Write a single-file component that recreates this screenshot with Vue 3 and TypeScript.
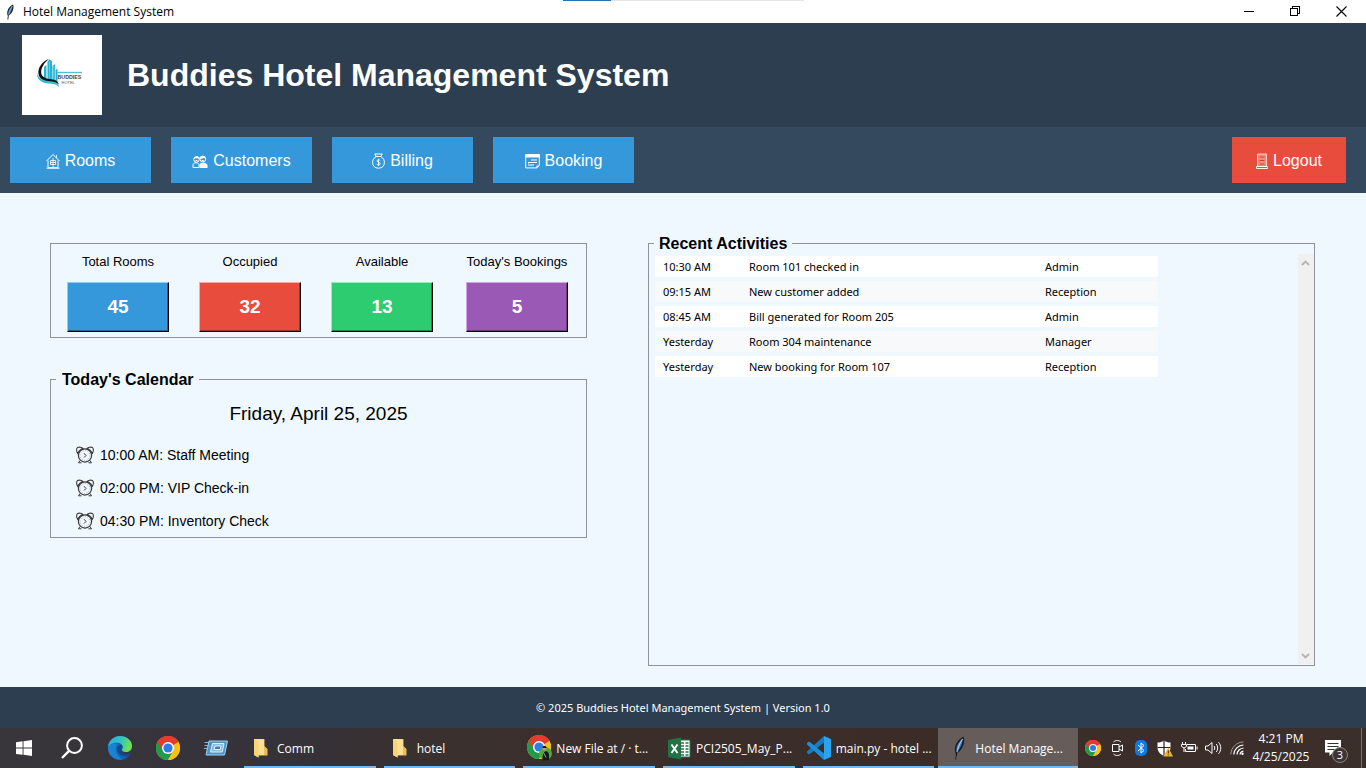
<script setup lang="ts">
interface NavItem {
  label: string
  icon: 'rooms' | 'customers' | 'billing' | 'booking'
}
interface Stat {
  label: string
  value: number
  tone: string
}
interface Activity {
  time: string
  text: string
  user: string
}
interface Task {
  label: string
  icon: 'folder' | 'profile' | 'excel' | 'code' | 'feather'
  active?: boolean
}

const navItems: NavItem[] = [
  { label: 'Rooms', icon: 'rooms' },
  { label: 'Customers', icon: 'customers' },
  { label: 'Billing', icon: 'billing' },
  { label: 'Booking', icon: 'booking' },
]

const stats: Stat[] = [
  { label: 'Total Rooms', value: 45, tone: 'blue' },
  { label: 'Occupied', value: 32, tone: 'red' },
  { label: 'Available', value: 13, tone: 'green' },
  { label: "Today's Bookings", value: 5, tone: 'purple' },
]

const events: string[] = ['10:00 AM: Staff Meeting', '02:00 PM: VIP Check-in', '04:30 PM: Inventory Check']

const activities: Activity[] = [
  { time: '10:30 AM', text: 'Room 101 checked in', user: 'Admin' },
  { time: '09:15 AM', text: 'New customer added', user: 'Reception' },
  { time: '08:45 AM', text: 'Bill generated for Room 205', user: 'Admin' },
  { time: 'Yesterday', text: 'Room 304 maintenance', user: 'Manager' },
  { time: 'Yesterday', text: 'New booking for Room 107', user: 'Reception' },
]

const tasks: Task[] = [
  { label: 'Comm', icon: 'folder' },
  { label: 'hotel', icon: 'folder' },
  { label: 'New File at / · t...', icon: 'profile' },
  { label: 'PCI2505_May_P...', icon: 'excel' },
  { label: 'main.py - hotel ...', icon: 'code' },
  { label: 'Hotel Manage...', icon: 'feather', active: true },
]
</script>

<template>
  <div class="screen">
    <svg class="defs" aria-hidden="true">
      <defs>
        <symbol id="feather" viewBox="0 0 14 24">
          <path d="M11.500.8C8 2 4.500 6 3.200 10.500c-.8 3-.3 5.500.8 7.500L5 17c3-1 6-5.500 7-10 .5-2.500.3-5-.5-6.200z" fill="#16202c" />
          <path d="M10.800 2.500C8 4.500 5 8.500 4.500 12.500c-.2 1.500 0 2.700.5 3.500 2.500-2.500 5.500-8 5.800-13.500z" fill="#4a80bd" />
          <path d="M10.600 3C7.500 7.500 5 13 3.800 22.800" fill="none" stroke="#dbe6f2" stroke-width=".8" />
          <path d="M4.800 16 3.700 23.300" stroke="#111" stroke-width="1.200" />
        </symbol>
        <symbol id="chrome" viewBox="0 0 24 24">
          <circle cx="12" cy="12" r="12" fill="#fbc116" />
          <path d="M12 12 22.400 6A12 12 0 0 0 1.600 6z" fill="#e33b2e" />
          <path d="M12 12 1.600 6A12 12 0 0 0 12 24l5.200-9z" fill="#219a4c" />
          <path d="M1.600 6 6.800 15 12 12V6.500z" fill="#219a4c" />
          <path d="M1.600 6A12 12 0 0 1 22.400 6H12L5 12z" fill="#e33b2e" />
          <path d="M12 24l5.200-9L22.400 6A12 12 0 0 1 12 24z" fill="#fbc116" />
          <circle cx="12" cy="12" r="6" fill="#fff" />
          <circle cx="12" cy="12" r="4.600" fill="#2f7bea" />
        </symbol>
      </defs>
    </svg>

    <header class="titlebar">
      <svg class="title-icon" width="10" height="16"><use href="#feather" /></svg>
      <span class="title-text">Hotel Management System</span>
      <div class="window-buttons">
        <button type="button" aria-label="Minimize">
          <svg width="11" height="11" viewBox="0 0 11 11" shape-rendering="crispEdges"><path d="M0 5.500h10" stroke="#000" /></svg>
        </button>
        <button type="button" aria-label="Restore">
          <svg width="11" height="11" viewBox="0 0 11 11" shape-rendering="crispEdges">
            <path d="M.5 2.500h7v7h-7zM2.500 2.500v-2h7v7h-2" fill="none" stroke="#000" />
          </svg>
        </button>
        <button type="button" aria-label="Close">
          <svg width="11" height="11" viewBox="0 0 11 11"><path d="M.5.5l10 10M10.500.5l-10 10" stroke="#000" stroke-width="1.100" /></svg>
        </button>
      </div>
      <div class="load-strip"></div>
    </header>

    <div class="banner">
      <svg class="logo" width="80" height="80" viewBox="0 0 80 80" role="img" aria-label="Buddies Hotel logo">
        <rect width="80" height="80" fill="#fff" />
        <path d="M22 44V32l2.500-2v15zM25.500 45V27l2-2.800 2.500 2V46zM30.500 46V31l2.500-2v18zM33.500 47V35l2-1.500V47z" fill="#25b4d2" />
        <path d="M24.500 30v15M27.500 27v19M32 31v15" stroke="#a6e2ec" stroke-width=".5" />
        <path d="M27 24c-7 2.500-11.500 9-10.500 15 .8 5 5.500 7.500 11 8 4 .3 7 .5 9.500 2.500-1.500-4-5-5.200-9-5.500-5-.4-8.500-2.500-8.800-6.500-.3-4.500 3-10 7.800-13.500z" fill="#111" />
        <path d="M15 38c-.5 6 4 10 11.500 10.500 4.500.3 8 .6 11 4-1.500-4.500-4-6-9-6.300C21 45.800 16 43 15 38z" fill="#35b9cf" />
        <path d="M35 37.500h25" stroke="#52bfd2" stroke-width="1.400" />
        <text x="35.500" y="44" font-size="5.300" font-weight="700" fill="#444">BUDDIES</text>
        <text x="39.500" y="48.500" font-size="4" fill="#555">HOTEL</text>
      </svg>
      <h1>Buddies Hotel Management System</h1>
    </div>

    <nav class="toolbar">
      <button v-for="item in navItems" :key="item.label" type="button" class="nav-button">
        <svg v-if="item.icon === 'rooms'" width="14" height="16" viewBox="0 0 14 16" fill="none" stroke="#fff">
          <path d="M.5 8 7 1.500 13.500 8M2 7.500v7.200h10V7.500M.5 15.200h13" />
          <path d="M10.500 2v3M4.500 7.500h5v4h-5zM7 5v10M4.500 9.500h5" stroke-width=".8" />
        </svg>
        <svg v-else-if="item.icon === 'customers'" width="16" height="16" viewBox="0 0 16 16">
          <g fill="none" stroke="#fff">
            <circle cx="4.500" cy="6.500" r="2.700" />
            <circle cx="10.800" cy="6" r="2.900" />
            <path d="M1 14.500v-2.800c.5-1.500 1.500-2 3-2s2.500.5 3 2v2.800z" />
          </g>
          <path d="M1.500 5.500c.5-2.500 5-3.500 6-.5 1-3 6-2.500 6.500.8l-2.200-.8-2 .7-2.300-.2-3.200-.3zM7.500 15v-3.500c.5-1.200 1.800-2 3.500-2s3.700.8 4.500 2.500v3z" fill="#fff" />
          <path d="M3.500 7.500h2M9.700 7.500h2" stroke="#fff" />
        </svg>
        <svg v-else-if="item.icon === 'billing'" width="13" height="16" viewBox="0 0 13 16" fill="none" stroke="#fff">
          <path d="M4.200 3.500 2.800 1h7.400L8.800 3.500M3.500 3.500h6M4 3.800C1.500 5 .6 7.200.6 9.500c0 3.500 2.300 5.700 5.900 5.700s5.900-2.200 5.900-5.700C12.400 7.200 11.500 5 9 3.800" />
          <path d="M8.200 7.500C7.500 6.500 5 6.600 5 8s3.200 1.200 3.200 2.700-2.700 1.600-3.500.4M6.500 5.800v7" stroke-width=".9" />
        </svg>
        <svg v-else width="15" height="16" viewBox="0 0 15 16">
          <path d="M.7 1.500h13.600v11L12 14.900H.7z" fill="none" stroke="#fff" />
          <path d="M.5 1h14v3.500H.5z" fill="#fff" />
          <path d="M6 7h6M3 9.500h9M3 12h6M3.500 10.500l1-1.500" stroke="#fff" />
          <path d="M11.500 15v-2.500h2.800z" fill="#fff" />
        </svg>
        <span>{{ item.label }}</span>
      </button>
      <button type="button" class="nav-button logout">
        <svg width="12" height="16" viewBox="0 0 12 16">
          <path d="M1.500 1h9v12.500h-9z" fill="#f08a7f" stroke="#fbd9d5" stroke-width=".9" />
          <path d="M3.500 4h5M3.500 7.500h5M3.500 11h5" stroke="#d4402f" stroke-width="1.200" />
          <path d="M.5 13.500h11v2H.5z" fill="#e74c3c" stroke="#fff" stroke-width=".9" />
        </svg>
        <span>Logout</span>
      </button>
    </nav>

    <main class="content">
      <div class="left">
        <section class="stats" aria-label="Room statistics">
          <div v-for="stat in stats" :key="stat.label" class="stat">
            <span class="stat-label">{{ stat.label }}</span>
            <span class="stat-value" :class="stat.tone">{{ stat.value }}</span>
          </div>
        </section>

        <fieldset class="calendar">
          <legend>Today's Calendar</legend>
          <p class="date">Friday, April 25, 2025</p>
          <ul>
            <li v-for="event in events" :key="event">
              <svg width="18" height="18" viewBox="0 0 18 18" fill="none" stroke="#3a3a3a">
                <circle cx="9" cy="9.500" r="6.600" stroke-width="1.200" />
                <circle cx="9" cy="9.500" r="4.900" stroke="#999" stroke-width=".8" stroke-dasharray="1 1.500" />
                <path d="M1.800 7.500C.4 6 .2 2.500 1.500 1.600 3 .8 5.800 1 7 2.600 4.800 3.300 2.700 5 1.800 7.500zM16.200 7.500c1.400-1.500 1.600-5 .3-5.900-1.500-.8-4.300-.6-5.500 1 2.200.7 4.300 2.400 5.200 4.900z" stroke-width="1.100" />
                <path d="M4 14.500 2.500 16.800H5.500M14 14.500l1.500 2.300h-3M8 7.200l2 2.300L8 11.500" />
              </svg>
              <span>{{ event }}</span>
            </li>
          </ul>
        </fieldset>
      </div>

      <fieldset class="activities">
        <legend>Recent Activities</legend>
        <div class="scroll-area">
          <div class="table-wrap">
            <table aria-label="Recent Activities">
              <tbody>
                <tr v-for="row in activities" :key="row.text">
                  <td class="time">{{ row.time }}</td>
                  <td class="what">{{ row.text }}</td>
                  <td class="who">{{ row.user }}</td>
                </tr>
              </tbody>
            </table>
          </div>
          <div class="scrollbar">
            <button type="button" aria-label="Scroll up">
              <svg width="9" height="6" viewBox="0 0 9 6"><path d="M1 5 4.500 1.500 8 5" fill="none" stroke="#b4b4b4" stroke-width="1.800" /></svg>
            </button>
            <button type="button" aria-label="Scroll down">
              <svg width="9" height="6" viewBox="0 0 9 6"><path d="M1 1l3.500 3.500L8 1" fill="none" stroke="#b4b4b4" stroke-width="1.800" /></svg>
            </button>
          </div>
        </div>
      </fieldset>
    </main>

    <footer class="footer">© 2025 Buddies Hotel Management System | Version 1.0</footer>

    <div class="taskbar">
      <div class="launchers">
        <button type="button" aria-label="Start">
          <svg width="16" height="16" viewBox="0 0 16 16" fill="#fff"><path d="M0 2.200 6.600 1.300v6.300H0zM7.500 1.200 16 0v7.600H7.500zM0 8.500h6.600v6.300L0 13.900zM7.500 8.500H16V16l-8.500-1.200z" /></svg>
        </button>
        <button type="button" aria-label="Search">
          <svg width="22" height="22" viewBox="0 0 22 22" fill="none" stroke="#fff" stroke-width="2"><circle cx="13.500" cy="8.500" r="7.400" /><path d="M8.300 13.700 1 21" stroke-width="2.400" /></svg>
        </button>
        <button type="button" aria-label="Microsoft Edge">
          <svg width="24" height="24" viewBox="0 0 24 24">
            <defs>
              <linearGradient id="edge-top" x1="0" x2="1" y2=".3"><stop stop-color="#2aa9e8" /><stop offset=".6" stop-color="#36c5b8" /><stop offset="1" stop-color="#70e052" /></linearGradient>
              <linearGradient id="edge-low" x1="0" x2="1"><stop stop-color="#167bd0" /><stop offset="1" stop-color="#104f9e" /></linearGradient>
            </defs>
            <circle cx="12" cy="12" r="12" fill="url(#edge-low)" />
            <path d="M0 11C1 4 6 0 12 0c7 0 12 4.500 12 10 0 4-3 6-6 6-2.500 0-4-1-4-2s1-1.500 1-3-2-4.500-6-4.500S1.500 8.500 0 11z" fill="url(#edge-top)" />
            <path d="M9 8.500C6 12 7.500 20 14.500 23.500 5 24.500 0 18 0 11.500 2 7.500 6.500 6.500 9 8.500z" fill="#1c83d4" />
            <path d="M13.500 12c-1 5 4 7 9.500 4.500l-1.500 2.700c-6 2.800-13-.8-12.500-6.700.2-2 2-3.500 4-3.500 1.500 1 1.200 2 .5 3z" fill="#114a8c" />
            <path d="M24.500 13.500c-1.500 2-3.500 2.800-6.500 2.800-2.500 0-4-.8-4.300-2.300-1 2.800 3 5.500 8.800 3l1.800-1z" fill="#38333a" />
          </svg>
        </button>
        <button type="button" aria-label="Chrome"><svg width="24" height="24"><use href="#chrome" /></svg></button>
        <button type="button" aria-label="Run">
          <svg width="24" height="18" viewBox="0 0 24 18">
            <path d="M5 2h18.500l-3 14H2z" fill="#4f94c7" stroke="#9fd0ef" />
            <path d="M8.500 4.500H20l-1.700 8.500H6.500z" fill="#85bee3" stroke="#d9f0fc" />
            <path d="M11 7h6l-.7 3.500h-6z" fill="#3c7eaf" stroke="#e7f6fd" />
            <path d="M.5 3.500H5M.5 6.500h4M0 9.500h3" stroke="#83b9dc" />
          </svg>
        </button>
      </div>

      <div class="tasks">
        <button v-for="task in tasks" :key="task.label" type="button" class="task" :class="{ active: task.active }">
          <span class="task-icon">
            <svg v-if="task.icon === 'folder'" width="16" height="20" viewBox="0 0 16 20">
              <path d="M1 1h10.500v7l3 3v6.500H5z" fill="#e9bd58" />
              <path d="M1 1h6l4 .5V17H5.500v2.500L1 17z" fill="#fbe093" />
              <path d="M1 1l4.500 2.500v16L1 17z" fill="#f8d477" />
            </svg>
            <svg v-else-if="task.icon === 'profile'" width="25" height="26" viewBox="0 0 25 26">
              <use href="#chrome" width="24" height="24" />
              <circle cx="18.500" cy="18.500" r="6.500" fill="#51a83a" />
              <path d="M15.500 25.500c0-5 .3-8 2.500-9s4 1 4 4V25z" fill="#16191c" />
              <circle cx="17.500" cy="13.500" r="2" fill="#c99776" />
              <path d="M15.500 13c0-3 4-3 4 0z" fill="#16191c" />
              <path d="M16.500 17.500l2.500 5" stroke="#999" />
            </svg>
            <svg v-else-if="task.icon === 'excel'" width="23" height="23" viewBox="0 0 23 23">
              <path d="M11 3h11v17H11z" fill="#fff" stroke="#217346" />
              <path d="M13 6h3M17.500 6h3M13 9h3M17.500 9h3M13 12h3M17.500 12h3M13 15h3M17.500 15h3M13 18h3M17.500 18h3" stroke="#217346" stroke-width="1.500" />
              <path d="M0 3 13 .5v22L0 20z" fill="#217346" />
              <path d="M3.500 7.500l6 8.500M9.500 7.500l-6 8.500" stroke="#fff" stroke-width="2" />
            </svg>
            <svg v-else-if="task.icon === 'code'" width="24" height="24" viewBox="0 0 24 24">
              <path d="M17 0l7 3v18l-7 3z" fill="#2aa4f0" />
              <path d="M17 0v6.500L3.500 17.500 1.800 18.500 0 17v-1.500z" fill="#167dc4" />
              <path d="M17 24v-6.500L3.500 6.500 1.800 5.500 0 7v1.500z" fill="#1b8fdb" />
            </svg>
            <svg v-else width="14" height="24"><use href="#feather" /></svg>
          </span>
          <span class="task-label">{{ task.label }}</span>
        </button>
      </div>

      <div class="tray">
        <button type="button" aria-label="Chrome background"><svg width="16" height="16"><use href="#chrome" /></svg></button>
        <button type="button" aria-label="Meet Now">
          <svg width="13" height="16" viewBox="0 0 13 16" fill="none" stroke="#fff"><path d="M1.500 4.500h6.500v7H1.500zM8 7l3.500-2v6L8 9M2.500 2C4.500 0 8 0 10 2M2.500 14c2 2 5.500 2 7.500 0" /></svg>
        </button>
        <button type="button" aria-label="Bluetooth">
          <svg width="12" height="16" viewBox="0 0 12 16"><rect width="12" height="16" rx="5" fill="#0f7be0" /><path d="M3 5l6 5.500L6 13V3l3 2.500L3 11" fill="none" stroke="#fff" /></svg>
        </button>
        <button type="button" aria-label="Security">
          <svg width="16" height="17" viewBox="0 0 16 17">
            <path d="M7 .5C9 2 11 2.500 13.500 2.500v5c0 4-3 7-6.500 8.500C3.500 14.500.5 11.500.5 7.500v-5C3 2.500 5 2 7 .5z" fill="#fff" />
            <path d="M7 .5v15.500M.5 7.500h13" stroke="#292423" stroke-width="1.200" />
            <path d="M11.300 7.500 16 16.500H6.500z" fill="#f5b324" /><path d="M11.300 10.500v3M11.300 14.500v1" stroke="#392d1e" />
          </svg>
        </button>
        <button type="button" aria-label="Battery">
          <svg width="17" height="12" viewBox="0 0 17 12" fill="none" stroke="#fff"><path d="M6 2.500h8.500v7H4.500V7M16 4.500v3" /><path d="M6.500 4.500h6v3h-6z" fill="#fff" stroke="none" /><path d="M1.500 0v2.500M4.500 0v2.500M.5 2.500h5v2L3 6 .5 4.500zM3 6v4" /></svg>
        </button>
        <button type="button" aria-label="Volume">
          <svg width="17" height="14" viewBox="0 0 17 14" fill="none" stroke="#fff"><path d="M.5 5h2.500l4-3.500v11L3 9H.5zM9 5c1 1.200 1 2.800 0 4M11.200 3c2 2.300 2 5.700 0 8M13.500 1.200c3 3.500 3 8.100 0 11.600" /></svg>
        </button>
        <button type="button" aria-label="Network">
          <svg width="14" height="14" viewBox="0 0 14 14" fill="none" stroke="#fff"><path d="M.8 13.500C1 6.500 6.500 1 13.500 1" stroke="#999" /><path d="M3.800 13.500c.2-5.200 4.500-9.300 9.700-9.500M7 13.500c.2-3.500 3-6.300 6.500-6.500M10 13.500c.2-2 1.500-3.300 3.500-3.500" stroke-width="1.200" /><circle cx="12.500" cy="12.800" r="1.200" fill="#fff" stroke="none" /></svg>
        </button>
        <button type="button" class="clock"><span>4:21 PM</span><span>4/25/2025</span></button>
        <button type="button" class="notices" aria-label="3 notifications">
          <svg width="16" height="16" viewBox="0 0 16 16"><path d="M0 0h16v12.500H8L4.500 16v-3.500H0z" fill="#fff" /><path d="M2.500 3.500h11M2.500 6.500h11M2.500 9.500h7" stroke="#3b2f2c" /></svg>
          <span class="badge">3</span>
        </button>
        <button type="button" class="show-desktop" aria-label="Show desktop"></button>
      </div>
    </div>
  </div>
</template>

<style>
body {
  margin: 0;
}
</style>

<style scoped>
.screen {
  --ui: "Noto Sans", "Open Sans", sans-serif;
  --shell: "Open Sans", "Noto Sans", sans-serif;
  display: flex;
  flex-direction: column;
  min-height: 100vh;
  background: #f0f8ff;
  color: #000;
  font-family: "Liberation Sans", Arial, sans-serif;
}
.screen * {
  box-sizing: border-box;
}
.defs {
  position: absolute;
  width: 0;
  height: 0;
}
button {
  margin: 0;
  padding: 0;
  border: 0;
  background: none;
  color: inherit;
  font: inherit;
}
svg {
  flex: none;
}

.titlebar {
  position: relative;
  display: flex;
  align-items: center;
  height: 23px;
  padding: 0 2px 0 5px;
  background: #fff;
  font-family: var(--shell);
  font-size: 12px;
}
.title-text {
  margin-left: 8px;
}
.window-buttons {
  display: flex;
  margin-left: auto;
}
.window-buttons button {
  display: flex;
  align-items: center;
  justify-content: center;
  width: 46px;
  height: 21px;
}
.load-strip {
  position: absolute;
  top: 0;
  left: 41.2%;
  width: 241px;
  height: 1px;
  background: linear-gradient(to right, #2673b8 20%, #e4e4e4 20%);
}

.banner {
  display: flex;
  align-items: center;
  gap: 25px;
  padding: 12px 22px;
  background: #2c3e50;
}
.logo {
  display: block;
}
h1 {
  margin: 0;
  color: #fff;
  font-size: 32px;
  line-height: 38px;
}

.toolbar {
  display: flex;
  gap: 20px;
  padding: 10px 20px 10px 10px;
  background: #34495e;
}
.nav-button {
  display: flex;
  align-items: center;
  justify-content: center;
  gap: 5px;
  width: 141px;
  height: 46px;
  padding-top: 2px;
  background: #3498db;
  color: #fff;
  font-size: 16px;
}
.nav-button.logout {
  width: 114px;
  margin-left: auto;
  background: #e74c3c;
}

.content {
  display: grid;
  flex: 1;
  grid-template-columns: 537fr 667fr;
  gap: 61px;
  padding: 50px 51px 21px 50px;
}
.stats {
  display: grid;
  grid-template-columns: 102px 102px 102px 108px;
  justify-content: space-between;
  padding: 10px 15px 5px 16px;
  border: 1px solid #8e949a;
}
.stat {
  display: flex;
  flex-direction: column;
  align-items: center;
  gap: 12px;
}
.stat-label {
  font-size: 13px;
  line-height: 16px;
  white-space: nowrap;
}
.stat-value {
  width: 102px;
  border: 1px solid #000;
  color: #fff;
  font-size: 19px;
  font-weight: 700;
  line-height: 48px;
  text-align: center;
}
.blue {
  border-top-color: #8fcdf5;
  border-left-color: #8fcdf5;
  background: #3498db;
  box-shadow: inset -1px -1px #216493;
}
.red {
  border-top-color: #f9aaa2;
  border-left-color: #f9aaa2;
  background: #e74c3c;
  box-shadow: inset -1px -1px #9a3329;
}
.green {
  border-top-color: #92efb7;
  border-left-color: #92efb7;
  background: #2ecc71;
  box-shadow: inset -1px -1px #20884c;
}
.purple {
  border-top-color: #d3a5e5;
  border-left-color: #d3a5e5;
  background: #9b59b6;
  box-shadow: inset -1px -1px #673c79;
}

fieldset {
  min-width: 0;
  margin: 0;
  border: 1px solid #8e949a;
}
legend {
  padding: 1px 5px 0;
  font-size: 16px;
  font-weight: 700;
  line-height: 18px;
}
.calendar {
  margin-top: 32px;
  padding: 13px 5px 0;
}
.calendar legend {
  padding-left: 6px;
}
.date {
  margin: 0;
  font-size: 19px;
  line-height: 24px;
  text-align: center;
}
ul {
  margin: 12px 0 0;
  padding: 0 0 0 20px;
  list-style: none;
}
li {
  display: flex;
  align-items: center;
  gap: 6px;
  height: 33px;
  font-size: 14px;
}

.activities {
  display: flex;
  margin-top: -9px;
  padding: 1px 0 1px 5px;
}
.scroll-area {
  display: flex;
  flex: 1;
  align-self: stretch;
}
.table-wrap {
  flex: 1;
  padding-top: 2px;
}
table {
  margin-left: 1px;
  border-collapse: collapse;
  font-family: var(--ui);
  font-size: 11px;
  line-height: 21px;
}
tr {
  border-bottom: 4px solid #f0f8ff;
  background: #fff;
}
tr:nth-child(even) {
  background: #f8f9fa;
}
td {
  height: 21px;
  padding: 0 8px;
}
.time {
  width: 86px;
}
.what {
  width: 296px;
}
.who {
  width: 121px;
}
.scrollbar {
  display: flex;
  flex-direction: column;
  justify-content: space-between;
  width: 16px;
  background: #f0f0f0;
}
.scrollbar button {
  display: flex;
  align-items: center;
  justify-content: center;
  height: 17px;
  padding-right: 2px;
}

.footer {
  padding: 10px;
  background: #2c3e50;
  color: #fff;
  font-family: var(--ui);
  font-size: 11px;
  line-height: 21px;
  text-align: center;
}

.taskbar {
  display: flex;
  height: 40px;
  background: linear-gradient(to right, #38353b, #35323a 20%, #3a302e 32%, #3b2c27 65%, #3b2f2b);
  color: #fff;
  font-family: var(--shell);
  font-size: 12px;
}
.launchers {
  display: flex;
}
.launchers button {
  display: flex;
  align-items: center;
  justify-content: center;
  width: 48px;
}
.tasks {
  display: flex;
  flex: 1;
  min-width: 0;
}
.task {
  position: relative;
  display: flex;
  flex: 1 1 0;
  align-items: center;
  min-width: 0;
  padding: 0 4px;
}
.task::after {
  position: absolute;
  right: 4px;
  bottom: 0;
  left: 4px;
  height: 2px;
  background: #76b9ed;
  content: "";
}
.task.active {
  background: #665d5b;
}
.task.active::after {
  right: 0;
  left: 0;
}
.task-icon {
  display: flex;
  flex: none;
  align-items: center;
  justify-content: center;
  width: 33px;
}
.task-label {
  overflow: hidden;
  white-space: nowrap;
}
.tray {
  display: flex;
  padding-left: 3px;
}
.tray button {
  display: flex;
  align-items: center;
  justify-content: center;
  width: 24px;
}
.tray .clock {
  flex-direction: column;
  width: 64px;
  line-height: 18px;
}
.tray .notices {
  position: relative;
  width: 48px;
  padding-right: 8px;
}
.badge {
  position: absolute;
  top: 19px;
  left: 19px;
  width: 16px;
  height: 16px;
  border: 1px solid #8b8583;
  border-radius: 50%;
  background: #3a3736;
  font-size: 11px;
  line-height: 14px;
  text-align: center;
}
.tray .show-desktop {
  width: 5px;
  border-left: 1px solid #77706e;
}
</style>
